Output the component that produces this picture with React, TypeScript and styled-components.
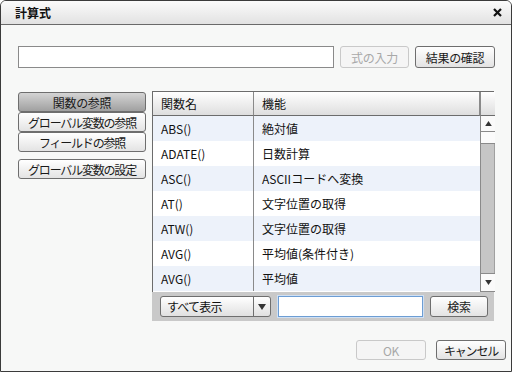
import styled, { createGlobalStyle } from "styled-components";

const GlobalStyle = createGlobalStyle`
	html, body {
		margin: 0;
		padding: 0;
		background: #ffffff;
	}
	body {
		font-family: "Noto Sans CJK JP", "Noto Sans", sans-serif;
		font-size: 12px;
		color: #111;
	}
	* {
		box-sizing: border-box;
	}
`;

const Window = styled.div`
	width: 512px;
	height: 372px;
	border: 1px solid #3b3b3b;
	border-radius: 6px 6px 0 0;
	background: #f7f8f7;
	display: flex;
	flex-direction: column;
	overflow: hidden;
`;

const TitleBar = styled.div`
	height: 24px;
	flex: none;
	display: flex;
	align-items: center;
	justify-content: space-between;
	padding: 0 9px 0 14px;
	background: linear-gradient(#fbfbfb, #e2e2e2);
	border-bottom: 1px solid #6a6a6a;
	font-weight: bold;
	font-size: 12px;
`;

const Body = styled.div`
	flex: 1;
	display: flex;
	flex-direction: column;
	padding: 21px 17px 0 17px;
`;

const FormulaRow = styled.div`
	display: flex;
	gap: 6px;
	height: 22px;
`;

const TextField = styled.div<{ $focus?: boolean }>`
	height: 22px;
	background: #fff;
	border: 1px solid ${(p) => (p.$focus ? "#6d9dd3" : "#8a8a8a")};
	box-shadow: ${(p) => (p.$focus ? "0 0 0 1px #cfe0f4" : "none")};
	flex: none;
`;

const Button = styled.div<{ $w: number; $disabled?: boolean; $pressed?: boolean; $tight?: boolean }>`
	width: ${(p) => p.$w}px;
	height: ${(p) => (p.$pressed !== undefined ? 20 : 22)}px;
	flex: none;
	display: flex;
	align-items: center;
	justify-content: center;
	border-radius: 3px;
	border: 1px solid ${(p) => (p.$disabled ? "#c9c9c9" : "#6e6e6e")};
	color: ${(p) => (p.$disabled ? "#a8a8a8" : "#1a1a1a")};
	background: ${(p) =>
		p.$disabled
			? "#f5f5f5"
			: p.$pressed
			? "linear-gradient(#d4d4d4, #a0a0a0)"
			: "linear-gradient(#ffffff, #e3e3e3)"};
	white-space: nowrap;
	font-size: 12px;
	letter-spacing: ${(p) => (p.$tight ? "-1.2px" : "-0.3px")};
`;

const Main = styled.div`
	display: flex;
	gap: 6px;
	margin-top: 23px;
`;

const SideNav = styled.div`
	width: 128px;
	display: flex;
	flex-direction: column;
	padding-top: 1px;
`;

const NavGroup = styled.div`
	display: flex;
	flex-direction: column;
	margin-bottom: 7px;
`;

const TablePanel = styled.div`
	width: 342px;
	display: flex;
	flex-direction: column;
	background: #c9c9c9;
`;

const Grid = styled.div`
	display: grid;
	grid-template-columns: 101px 226px 15px;
	border: 1px solid #6c6c6c;
	border-bottom: none;
	height: 201px;
	grid-template-rows: 24px 1fr;
	background: #fff;
`;

const HeadCell = styled.div<{ $last?: boolean }>`
	display: flex;
	align-items: center;
	padding-left: 8px;
	background: linear-gradient(#ffffff, #dedede);
	border-bottom: 1px solid #6c6c6c;
	border-right: ${(p) => (p.$last ? "none" : "1px solid #8a8a8a")};
	border-left: ${(p) => (p.$last ? "1px solid #8a8a8a" : "none")};
	font-size: 12px;
`;

const Rows = styled.div`
	grid-column: 1 / 3;
	display: flex;
	flex-direction: column;
`;

const Row = styled.div<{ $odd: boolean }>`
	height: 25px;
	display: grid;
	grid-template-columns: 101px 1fr;
	background: ${(p) => (p.$odd ? "#edf2fa" : "#ffffff")};
`;

const Cell = styled.div<{ $first?: boolean }>`
	display: flex;
	align-items: center;
	padding-left: 8px;
	border-right: ${(p) => (p.$first ? "1px solid #8a8a8a" : "none")};
	font-size: 12px;
`;

const ScrollBar = styled.div`
	display: flex;
	flex-direction: column;
	background: #c6c6c6;
	border-left: 1px solid #8a8a8a;
`;

const ScrollBtn = styled.div<{ $h: number; $top?: boolean }>`
	height: ${(p) => p.$h}px;
	flex: none;
	display: flex;
	align-items: center;
	justify-content: center;
	background: #fafafa;
	border-top: ${(p) => (p.$top ? "none" : "1px solid #8a8a8a")};
	border-bottom: 1px solid #8a8a8a;
`;

const Thumb = styled.div`
	height: 12px;
	flex: none;
	background: #fbfbfb;
	border-bottom: 1px solid #8a8a8a;
`;

const Track = styled.div`
	flex: 1;
	border-right: 1px solid #a0a0a0;
`;

const Footer = styled.div`
	height: 29px;
	display: flex;
	align-items: center;
	gap: 7px;
	padding-left: 8px;
`;

const Select = styled.div`
	width: 111px;
	height: 21px;
	display: flex;
	border: 1px solid #6e6e6e;
	border-radius: 3px;
	background: linear-gradient(#ffffff, #e0e0e0);
	overflow: hidden;
`;

const SelectLabel = styled.div`
	flex: 1;
	display: flex;
	align-items: center;
	padding-left: 6px;
	font-size: 12px;
	letter-spacing: -0.8px;
`;

const SelectArrow = styled.div`
	width: 17px;
	border-left: 1px solid #6e6e6e;
	display: flex;
	align-items: center;
	justify-content: center;
`;

const Actions = styled.div`
	display: flex;
	justify-content: flex-end;
	gap: 10px;
	margin-top: 19px;
	margin-right: -12px;
`;

const rows = [
	["ABS()", "絶対値"],
	["ADATE()", "日数計算"],
	["ASC()", "ASCIIコードへ変換"],
	["AT()", "文字位置の取得"],
	["ATW()", "文字位置の取得"],
	["AVG()", "平均値(条件付き)"],
	["AVG()", "平均値"],
];

const Triangle = ({ up, size = 7 }: { up?: boolean; size?: number }) => (
	<svg width={size} height={size - 2} viewBox="0 0 8 6">
		<path d={up ? "M4 0 L8 6 L0 6 Z" : "M0 0 L8 0 L4 6 Z"} fill="#333" />
	</svg>
);

const App = () => {
	return (
		<>
			<GlobalStyle />
			<Window>
				<TitleBar>
					<span>計算式</span>
					<svg width="9" height="9" viewBox="0 0 9 9">
						<path d="M1 1 L8 8 M8 1 L1 8" stroke="#111" strokeWidth="2.2" />
					</svg>
				</TitleBar>
				<Body>
					<FormulaRow>
						<TextField style={{ width: 316 }} />
						<Button $w={69} $disabled>
							式の入力
						</Button>
						<Button $w={80}>結果の確認</Button>
					</FormulaRow>
					<Main>
						<SideNav>
							<NavGroup>
								<Button $w={128} $pressed>
									関数の参照
								</Button>
								<Button $w={128} $pressed={false} $tight>
									グローバル変数の参照
								</Button>
								<Button $w={128} $pressed={false} $tight>
									フィールドの参照
								</Button>
							</NavGroup>
							<Button $w={128} $pressed={false} $tight>
								グローバル変数の設定
							</Button>
						</SideNav>
						<TablePanel>
							<Grid>
								<HeadCell>関数名</HeadCell>
								<HeadCell>機能</HeadCell>
								<HeadCell $last />
								<Rows>
									{rows.map(([name, desc], i) => (
										<Row key={i} $odd={i % 2 === 0}>
											<Cell $first>{name}</Cell>
											<Cell>{desc}</Cell>
										</Row>
									))}
								</Rows>
								<ScrollBar>
									<ScrollBtn $h={16} $top>
										<Triangle up />
									</ScrollBtn>
									<Thumb />
									<Track />
									<ScrollBtn $h={19}>
										<Triangle />
									</ScrollBtn>
								</ScrollBar>
							</Grid>
							<Footer>
								<Select>
									<SelectLabel>すべて表示</SelectLabel>
									<SelectArrow>
										<Triangle size={8} />
									</SelectArrow>
								</Select>
								<TextField $focus style={{ width: 145, height: 21 }} />
								<Button $w={58} style={{ height: 21 }}>
									検索
								</Button>
							</Footer>
						</TablePanel>
					</Main>
					<Actions>
						<Button $w={70} $disabled style={{ height: 20 }}>
							OK
						</Button>
						<Button $w={70} $tight style={{ height: 20 }}>
							キャンセル
						</Button>
					</Actions>
				</Body>
			</Window>
		</>
	);
};

export default App;
